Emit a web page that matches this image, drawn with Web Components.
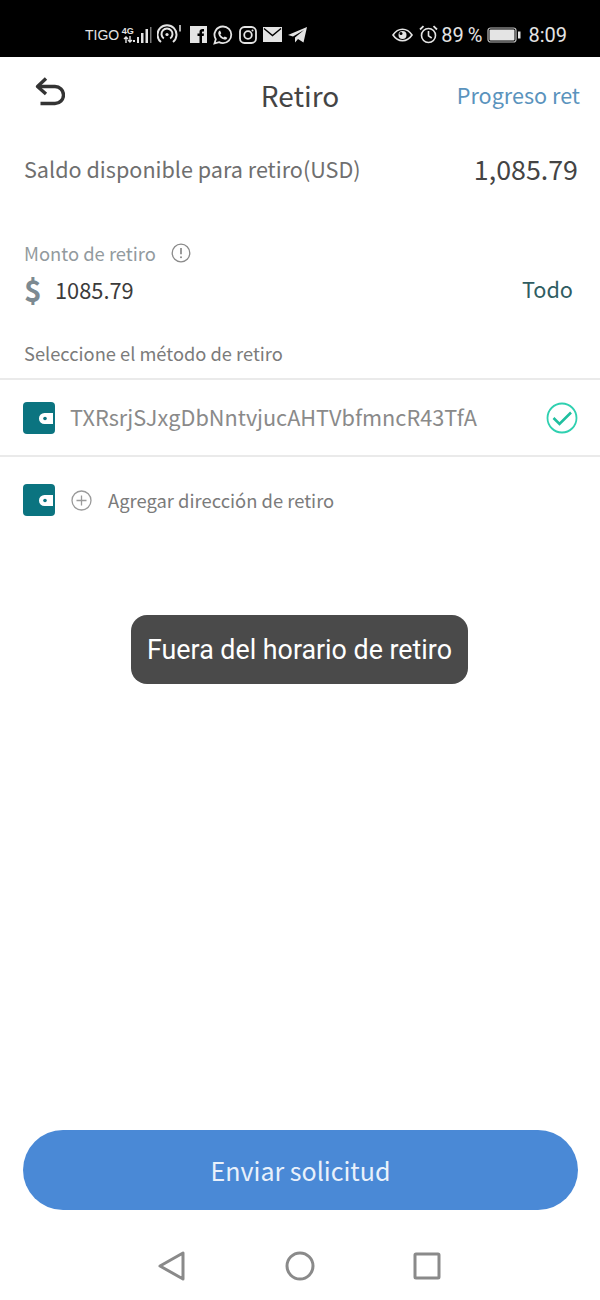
<!DOCTYPE html>
<html>
<head>
<meta charset="utf-8">
<style>
  html, body { margin: 0; padding: 0; background: #fff; }
  body { font-family: "Noto Sans CJK SC", "Noto Sans", sans-serif; }
</style>
</head>
<body>
<retiro-app></retiro-app>
<script>
"use strict";

const walletIcon = `
  <svg width="32" height="32" viewBox="0 0 32 32">
    <rect width="32" height="32" rx="4" fill="#0b7480"/>
    <path d="M21.500 11H30v11h-8.500a5.500 5.500 0 0 1 0-11z" fill="#fff"/>
    <circle cx="22" cy="16.500" r="1.800" fill="#0b7480"/>
  </svg>`;

customElements.define(
  "status-bar",
  class StatusBar extends HTMLElement {
    constructor() {
      super();
      this.attachShadow({ mode: "open" }).innerHTML = `
      <style>
      :host {
        display: flex;
        justify-content: space-between;
        align-items: center;
        height: 45px;
        padding: 12px 33px 0 85px;
        background: #000;
        color: #e4e4e4;
        font-family: "Liberation Sans", sans-serif;
      }
      .group { display: flex; align-items: center; }
      .carrier { font-size: 14px; margin-right: 3px; }
      .net { display: flex; flex-direction: column; align-items: center; width: 11px; font-size: 9px; font-weight: bold; line-height: 9px; }
      .pct { font-family: Roboto, sans-serif; font-size: 20px; margin: 0 5px 0 3px; word-spacing: -1px; }
      .time { font-family: Roboto, sans-serif; font-size: 20px; margin-left: 7px; }
      svg { display: block; }
      </style>
      <div class="group">
        <span class="carrier">TIGO</span>
        <span class="net">4G
          <svg width="10" height="7" viewBox="0 0 10 7" fill="none" stroke="#e4e4e4" stroke-width="1.400">
            <path d="M3 7V1M1 3l2-2 2 2M7 0v6M5 4l2 2 2-2"/>
          </svg>
        </span>
        <svg width="20" height="20" viewBox="0 0 20 20" fill="#e4e4e4" style="margin-right:4px">
          <rect x="0" y="15" width="2" height="2"/><rect x="4" y="12" width="2" height="6"/>
          <rect x="8" y="8" width="2.500" height="10"/><rect x="12.500" y="4" width="2.500" height="14"/>
          <rect x="17" y="2" width="1.500" height="16" fill="#777"/>
        </svg>
        <svg width="26" height="22" viewBox="0 0 26 22" fill="none" stroke="#e4e4e4" stroke-width="2" style="margin-right:7px">
          <path d="M4 18a9.500 9.500 0 1 1 12 0"/>
          <path d="M6.800 14.500a5.500 5.500 0 1 1 6.400 0"/>
          <circle cx="10" cy="10.500" r="1.600" fill="#e4e4e4" stroke="none"/>
          <path d="M23 1v6.500" stroke-width="1.500"/>
        </svg>
        <svg width="17" height="17" viewBox="0 0 17 17" style="margin-right:6px">
          <rect width="17" height="17" fill="#e4e4e4"/>
          <path d="M9.500 17v-7H7.500V7.500h2V5.800C9.500 3.800 10.700 3 12.400 3h1.600v2.500h-1c-.8 0-1 .4-1 1v1h2l-.3 2.500H12v7z" fill="#000"/>
        </svg>
        <svg width="20" height="20" viewBox="0 0 20 20" fill="none" style="margin-right:6px">
          <path d="M10 1.500a8.300 8.300 0 0 1 0 16.600 8.300 8.300 0 0 1-4-1L1.500 18.500l1.300-4.300A8.300 8.300 0 0 1 10 1.500z" stroke="#e4e4e4" stroke-width="1.800"/>
          <path d="M7 5.500l1.300 2.700-1 1.200c.7 1.400 1.800 2.400 3.300 3.100l1.200-1.100 2.500 1.300c-.3 1.500-1.600 2.200-3 1.900C8.200 14 5.800 11.500 5.300 8.800 5.100 7.400 5.700 6 7 5.500z" fill="#e4e4e4"/>
        </svg>
        <svg width="18" height="18" viewBox="0 0 18 18" fill="none" stroke="#e4e4e4" stroke-width="1.800" style="margin-right:6px">
          <rect x="1" y="1" width="16" height="16" rx="4.500"/>
          <circle cx="9" cy="9" r="3.800"/>
          <circle cx="13.500" cy="4.500" r="1" fill="#e4e4e4" stroke="none"/>
        </svg>
        <svg width="19" height="15" viewBox="0 0 19 15" style="margin-right:6px">
          <rect width="19" height="15" fill="#e4e4e4"/>
          <path d="M1 1.500l8.500 7 8.500-7" fill="none" stroke="#000" stroke-width="1.400"/>
        </svg>
        <svg width="19" height="16" viewBox="0 0 19 16">
          <path d="M19 0L15.500 15.500 10 12l-3 3.500V10.500L16 3 5 9.500 0 8z" fill="#e4e4e4"/>
        </svg>
      </div>
      <div class="group">
        <svg width="21" height="14" viewBox="0 0 21 14" fill="none" stroke="#e4e4e4" stroke-width="1.600" style="margin-right:6px">
          <path d="M1 7c2.500-3.800 5.800-5.800 9.500-5.800S17.500 3.200 20 7c-2.500 3.800-5.800 5.800-9.500 5.800S3.500 10.800 1 7z"/>
          <circle cx="10.500" cy="7" r="4" fill="#e4e4e4" stroke="none"/>
          <circle cx="9" cy="5.500" r="1.500" fill="#000" stroke="none"/>
        </svg>
        <svg width="19" height="19" viewBox="0 0 19 19" fill="none" stroke="#e4e4e4" stroke-width="1.600">
          <circle cx="9.500" cy="10.500" r="7"/>
          <path d="M9.500 6v4.800l3.200 2.200"/>
          <path d="M1 4.500L4.500 1.200M18 4.500L14.500 1.200" stroke-width="1.800"/>
        </svg>
        <span class="pct">89 %</span>
        <svg width="34" height="16" viewBox="0 0 34 16">
          <rect x="1" y="1" width="28" height="14" rx="2.500" fill="none" stroke="#bbb" stroke-width="1.200"/>
          <rect x="2.500" y="2.500" width="25" height="11" rx="1" fill="#e4e4e4"/>
          <rect x="31" y="4.500" width="2.500" height="7" fill="#e4e4e4"/>
        </svg>
        <span class="time">8:09</span>
      </div>`;
    }
  }
);

customElements.define(
  "app-header",
  class AppHeader extends HTMLElement {
    constructor() {
      super();
      this.attachShadow({ mode: "open" }).innerHTML = `
      <style>
      :host {
        display: grid;
        grid-template-columns: 1fr auto 1fr;
        align-items: center;
        height: 78px;
        padding: 0 20px;
      }
      .title { font-size: 28px; color: #444; margin-top: -2px; }
      .link { justify-self: end; font-size: 21.600px; color: #5a93bd; margin-top: -4px; }
      svg { display: block; margin: -8px 0 0 15px; }
      </style>
      <svg width="30" height="30" viewBox="0 0 30 30" fill="none" stroke="#333" stroke-width="3.400" stroke-linejoin="round">
        <path d="M11 1.500L2.500 9.500l8.500 7.500"/>
        <path d="M3 9.500h17a7.800 7.800 0 0 1 0 17H5.500"/>
      </svg>
      <span class="title"><slot></slot></span>
      <span class="link"><slot name="action"></slot></span>`;
    }
  }
);

customElements.define(
  "balance-row",
  class BalanceRow extends HTMLElement {
    constructor() {
      super();
      this.attachShadow({ mode: "open" }).innerHTML = `
      <style>
      :host {
        display: flex;
        justify-content: space-between;
        align-items: center;
        height: 36px;
        margin-top: 15px;
        padding: 0 22px 0 24px;
        color: #6f6f6f;
        font-size: 21.600px;
      }
      .value { font-size: 26.800px; color: #444; }
      </style>
      <span><slot></slot></span>
      <span class="value"><slot name="value"></slot></span>`;
    }
  }
);

customElements.define(
  "amount-field",
  class AmountField extends HTMLElement {
    constructor() {
      super();
      this.attachShadow({ mode: "open" }).innerHTML = `
      <style>
      :host { display: block; margin-top: 54px; padding: 0 27px 0 24px; }
      .label { display: flex; align-items: center; gap: 15px; height: 26px; font-size: 18.400px; color: #929a9e; }
      .input { display: flex; align-items: center; height: 46px; color: #3b3b3b; font-size: 21.800px; }
      .sign { width: 31px; font-size: 30px; font-weight: 700; color: #7d8a91; }
      .value { flex: 1; }
      .all { color: #2f5d62; font-size: 21.700px; margin-top: -2px; }
      svg { display: block; }
      </style>
      <div class="label">
        <span><slot name="label"></slot></span>
        <svg width="20" height="20" viewBox="0 0 20 20" fill="none" stroke="#8a8a8a" stroke-width="1.300">
          <circle cx="10" cy="10" r="8.800"/>
          <path d="M10 5v6.300" stroke-width="1.700"/>
          <circle cx="10" cy="14.200" r="1" fill="#8a8a8a" stroke="none"/>
        </svg>
      </div>
      <div class="input">
        <span class="sign">$</span>
        <span class="value"><slot name="value"></slot></span>
        <span class="all"><slot name="all"></slot></span>
      </div>`;
    }
  }
);

customElements.define(
  "section-label",
  class SectionLabel extends HTMLElement {
    constructor() {
      super();
      this.attachShadow({ mode: "open" }).innerHTML = `
      <style>
      :host {
        display: block;
        margin-top: 26px;
        padding: 0 24px 10px;
        height: 30px;
        line-height: 30px;
        font-size: 18.300px;
        color: #7b7b7b;
        border-bottom: 2px solid #eaeaea;
      }
      </style>
      <slot></slot>`;
    }
  }
);

customElements.define(
  "address-row",
  class AddressRow extends HTMLElement {
    constructor() {
      super();
      this.attachShadow({ mode: "open" }).innerHTML = `
      <style>
      :host {
        display: flex;
        align-items: center;
        height: 75px;
        padding: 0 21px 0 23px;
        border-bottom: 2px solid #eaeaea;
      }
      .icon { width: 32px; height: 32px; }
      .text { flex: 1; margin: -2px 0 0 15px; font-size: 21.700px; color: #8a8a8a; }
      svg { display: block; }
      </style>
      <div class="icon">${walletIcon}</div>
      <span class="text"><slot></slot></span>
      <svg width="34" height="34" viewBox="0 0 34 34" fill="none" stroke="#2fd0b0">
        <circle cx="17" cy="17" r="14.500" stroke-width="1.800"/>
        <path d="M8.500 17l6 6L26 11.500" stroke-width="2.600" stroke="#1fbf9f"/>
      </svg>`;
    }
  }
);

customElements.define(
  "add-address",
  class AddAddress extends HTMLElement {
    constructor() {
      super();
      this.attachShadow({ mode: "open" }).innerHTML = `
      <style>
      :host {
        display: flex;
        align-items: center;
        height: 86px;
        padding: 0 23px;
        font-size: 18.400px;
        color: #7b7b7b;
      }
      .icon { width: 32px; height: 32px; }
      svg { display: block; }
      .plus { margin: 0 16px 0 16px; }
      </style>
      <div class="icon">${walletIcon}</div>
      <svg class="plus" width="21" height="21" viewBox="0 0 21 21" fill="none" stroke="#9a9a9a" stroke-width="1.300">
        <circle cx="10.500" cy="10.500" r="9.500"/>
        <path d="M10.500 5.500v10M5.500 10.500h10"/>
      </svg>
      <span><slot></slot></span>`;
    }
  }
);

customElements.define(
  "toast-message",
  class ToastMessage extends HTMLElement {
    constructor() {
      super();
      this.attachShadow({ mode: "open" }).innerHTML = `
      <style>
      :host {
        position: absolute;
        top: 615px;
        left: 131px;
        width: 337px;
        height: 68px;
        padding-top: 1px;
        display: flex;
        align-items: center;
        justify-content: center;
        border-radius: 16px;
        background: #4a4a4a;
        color: #fff;
        font-family: Roboto, sans-serif;
        font-size: 26.800px;
      }
      </style>
      <slot></slot>`;
    }
  }
);

customElements.define(
  "submit-button",
  class SubmitButton extends HTMLElement {
    constructor() {
      super();
      this.attachShadow({ mode: "open" }).innerHTML = `
      <style>
      :host {
        display: flex;
        align-items: center;
        justify-content: center;
        height: 80px;
        margin: auto 22px 0 23px;
        border-radius: 40px;
        background: #4a89d6;
        color: #e9f1fb;
        font-size: 25px;
      }
      </style>
      <slot></slot>`;
    }
  }
);

customElements.define(
  "nav-bar",
  class NavBar extends HTMLElement {
    constructor() {
      super();
      this.attachShadow({ mode: "open" }).innerHTML = `
      <style>
      :host {
        display: flex;
        justify-content: space-between;
        align-items: center;
        height: 68px;
        padding: 22px 159px 0 158px;
      }
      svg { display: block; }
      </style>
      <svg width="28" height="30" viewBox="0 0 28 30" fill="none" stroke="#8a8a8a" stroke-width="3" stroke-linejoin="round">
        <path d="M25 2v26L2 15z"/>
      </svg>
      <svg width="30" height="30" viewBox="0 0 30 30" fill="none" stroke="#8a8a8a" stroke-width="3">
        <circle cx="15" cy="15" r="13"/>
      </svg>
      <svg width="28" height="28" viewBox="0 0 28 28" fill="none" stroke="#8a8a8a" stroke-width="3" stroke-linejoin="round">
        <rect x="2" y="2" width="24" height="24" rx="1"/>
      </svg>`;
    }
  }
);

customElements.define(
  "retiro-app",
  class RetiroApp extends HTMLElement {
    constructor() {
      super();
      this.attachShadow({ mode: "open" }).innerHTML = `
      <style>
      :host {
        position: relative;
        display: flex;
        flex-direction: column;
        width: 600px;
        height: 1300px;
        overflow: hidden;
        background: #fff;
      }
      </style>
      <status-bar></status-bar>
      <app-header>Retiro<span slot="action">Progreso ret</span></app-header>
      <balance-row>Saldo disponible para retiro(USD)<span slot="value">1,085.79</span></balance-row>
      <amount-field>
        <span slot="label">Monto de retiro</span>
        <span slot="value">1085.79</span>
        <span slot="all">Todo</span>
      </amount-field>
      <section-label>Seleccione el método de retiro</section-label>
      <address-row>TXRsrjSJxgDbNntvjucAHTVbfmncR43TfA</address-row>
      <add-address>Agregar dirección de retiro</add-address>
      <toast-message>Fuera del horario de retiro</toast-message>
      <submit-button>Enviar solicitud</submit-button>
      <nav-bar></nav-bar>`;
    }
  }
);
</script>
</body>
</html>
